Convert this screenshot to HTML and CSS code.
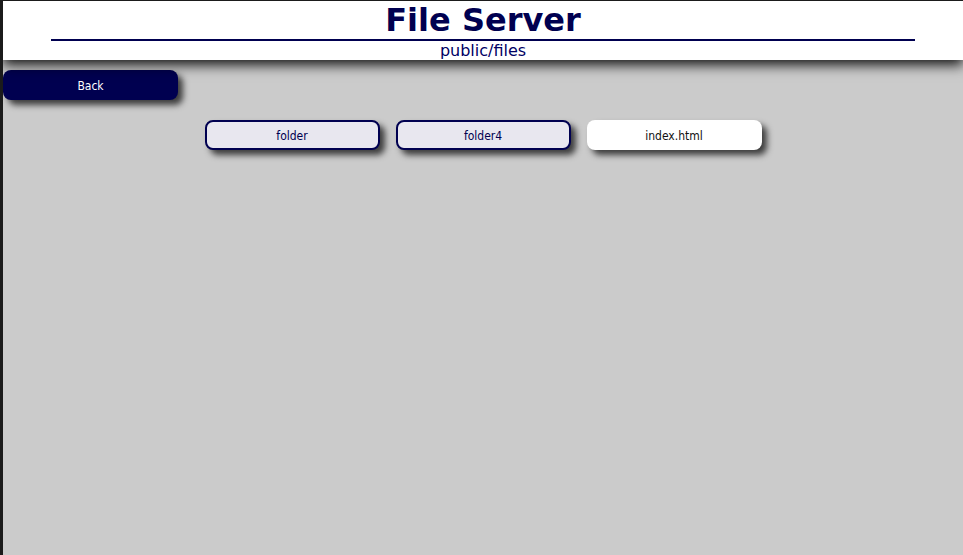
FILE: index.html
```html
<!DOCTYPE html>
<html>
<head>
<meta charset="utf-8">
<title>File Server</title>
<link rel="stylesheet" href="styles.css">
</head>
<body>
<div class="page">
  <header class="header">
    <h1 class="title">File Server</h1>
    <div class="rule"></div>
    <div class="path">public/files</div>
  </header>
  <div class="toolbar">
    <button class="btn back">Back</button>
  </div>
  <div class="items">
    <button class="btn item folder">folder</button>
    <button class="btn item folder">folder4</button>
    <button class="btn item file">index.html</button>
  </div>
</div>
</body>
</html>
```
FILE: styles.css
```css
html, body {
  margin: 0;
  height: 100%;
}
body {
  background: #1b1b1b;
  padding: 1px 0 0 3px;
  box-sizing: border-box;
}
.page {
  background: #cbcbcb;
  height: 100%;
  overflow: hidden;
}
.header {
  background: #ffffff;
  height: 59px;
  display: flex;
  flex-direction: column;
  align-items: center;
  box-shadow: 0 5px 12px rgba(0,0,0,0.9);
  position: relative;
}
.title {
  margin: 0;
  font-family: "DejaVu Sans", sans-serif;
  font-weight: bold;
  font-size: 32px;
  line-height: 38px;
  color: #000050;
  flex-shrink: 0;
}
.rule {
  width: 90%;
  height: 2px;
  background: #000050;
  flex-shrink: 0;
}
.path {
  font-family: "DejaVu Sans", sans-serif;
  font-size: 16px;
  line-height: 19px;
  color: #000064;
  flex-shrink: 0;
}
.toolbar {
  padding-top: 10px;
  display: flex;
}
.btn {
  width: 175px;
  height: 30px;
  border-radius: 8px;
  font-family: "DejaVu Sans Condensed", "DejaVu Sans", sans-serif;
  font-stretch: condensed;
  font-size: 12px;
  box-shadow: 5px 5px 6px rgba(0,0,0,0.7);
  padding: 2px 0 0;
  box-sizing: border-box;
}
.back {
  background: #000050;
  color: #ffffff;
  border: none;
}
.items {
  display: flex;
  justify-content: center;
  gap: 16px;
  padding-top: 20px;
}
.folder {
  background: #e8e7ef;
  border: 2px solid #000050;
  color: #000050;
}
.file {
  background: #ffffff;
  border: none;
  color: #111111;
}
```
